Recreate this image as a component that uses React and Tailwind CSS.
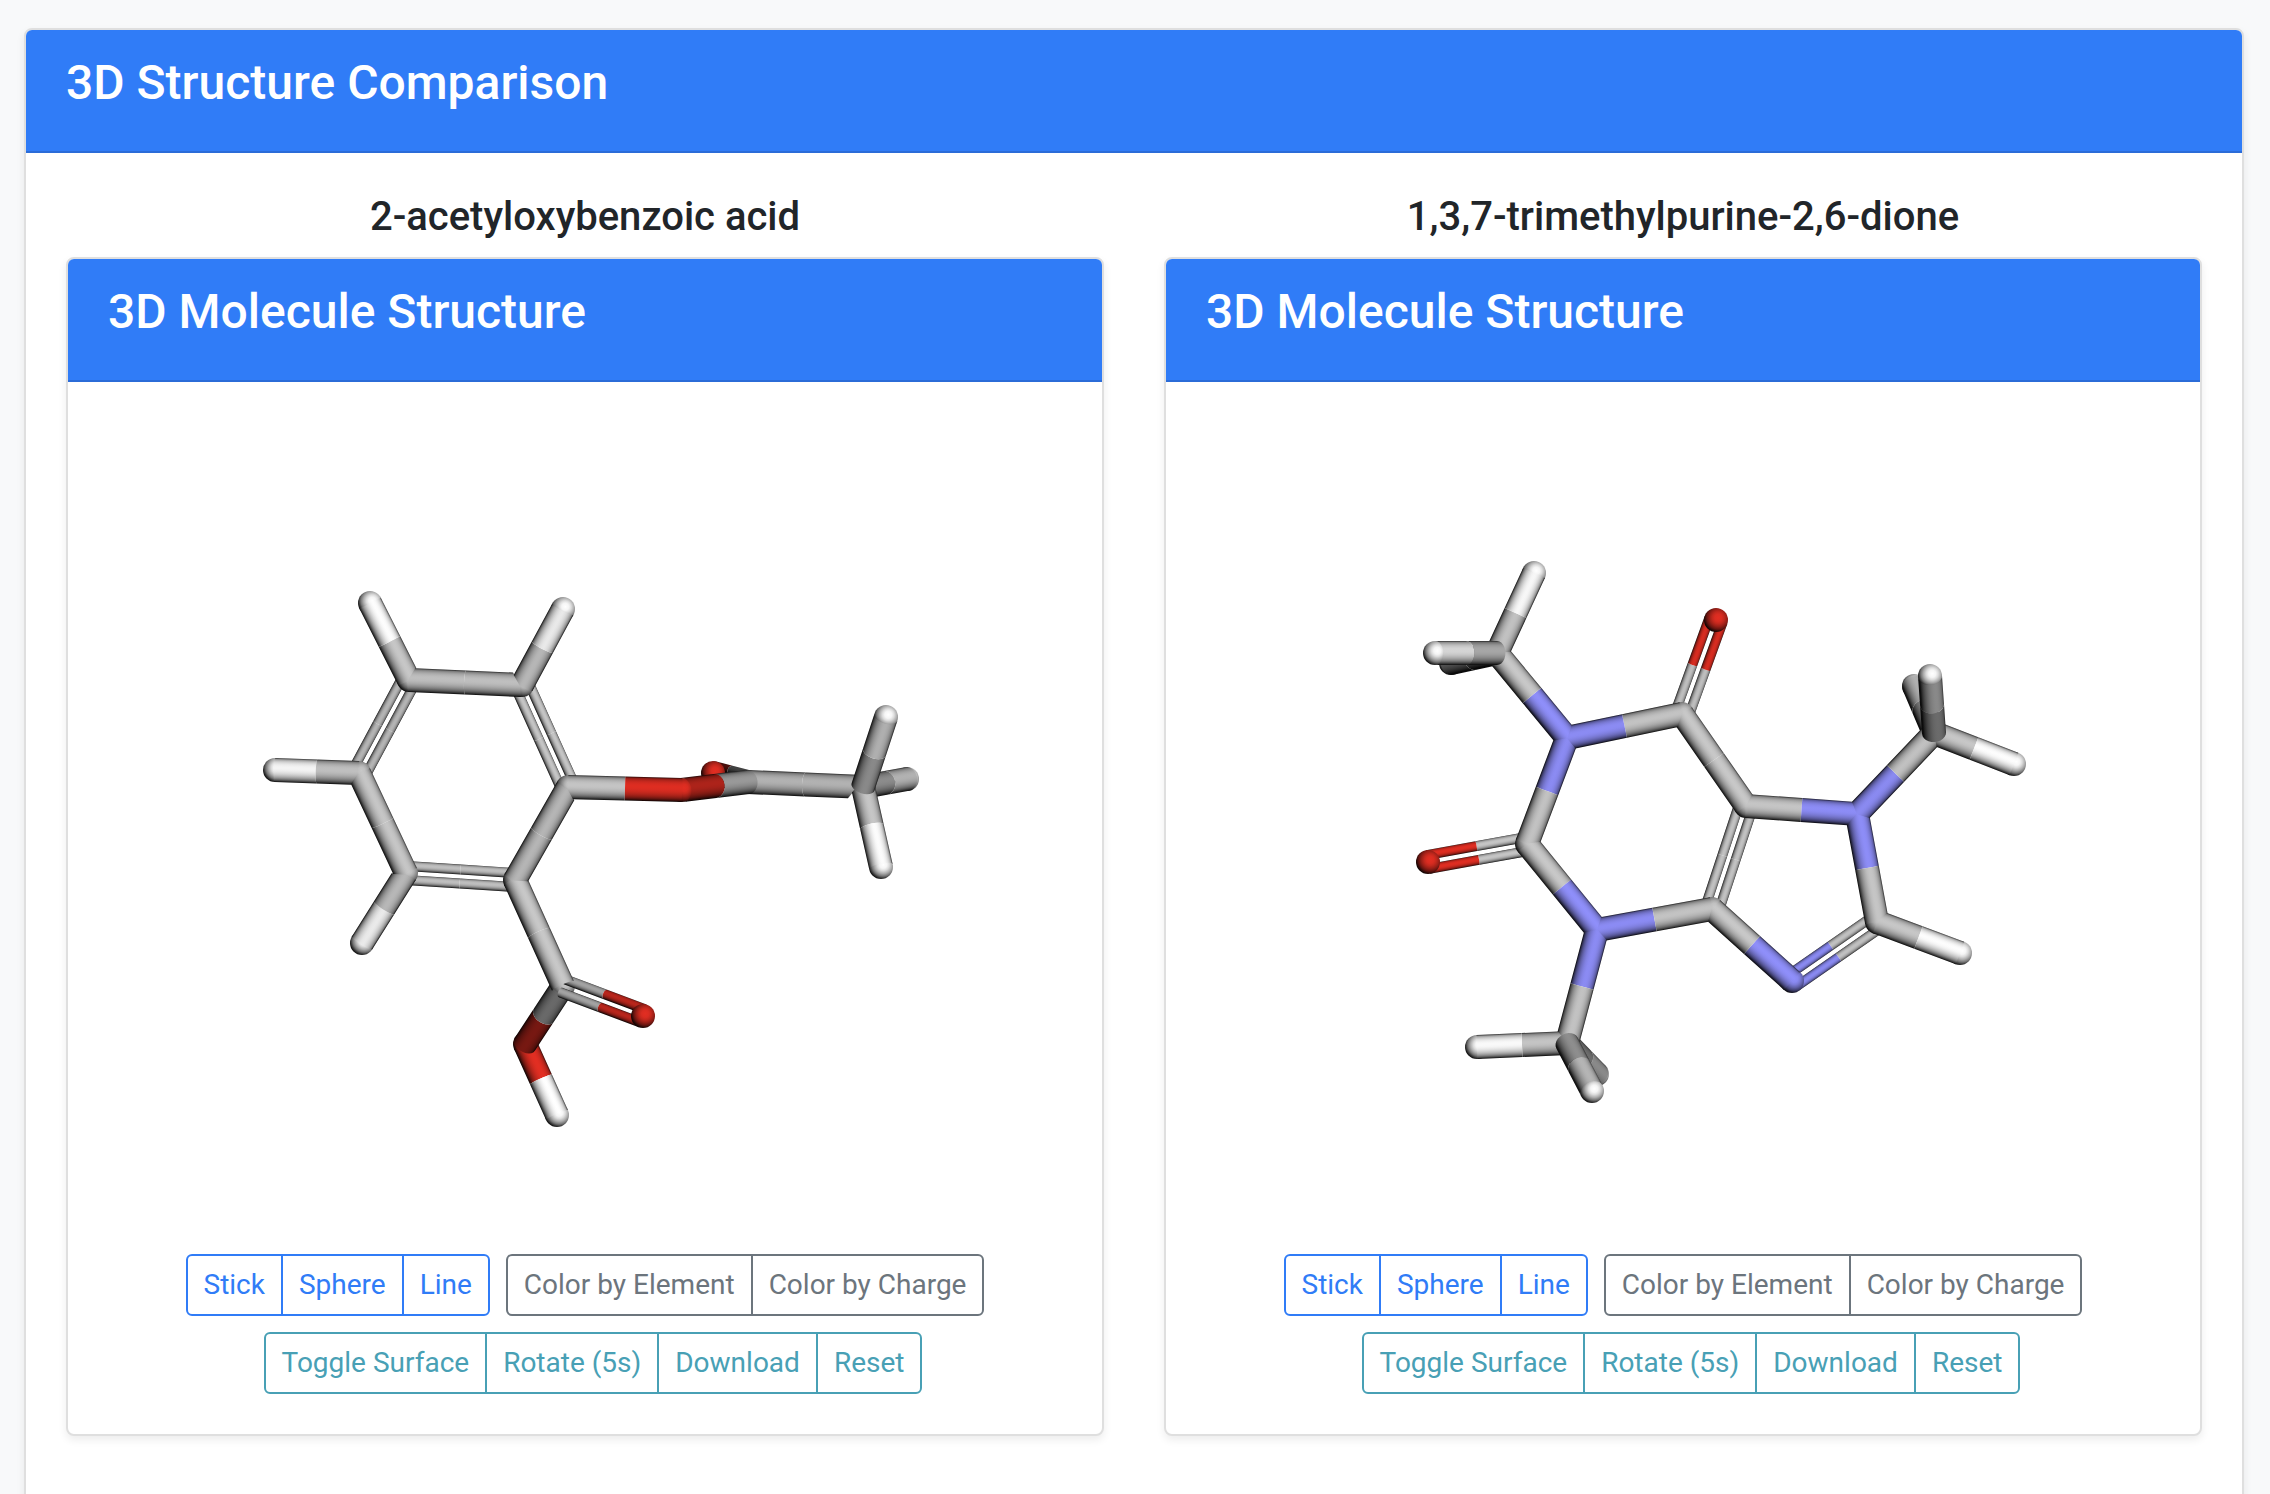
import React, { useId } from "react";

const STICK_RADIUS = 12;
const DOUBLE_RADIUS = 5;
const DOUBLE_OFFSET = 7;
const LIGHT = [0.189, 0.189, 0.963];

const ELEMENT_COLORS = {
  C: [200, 200, 200],
  H: [255, 255, 255],
  N: [143, 143, 250],
  O: [226, 46, 34],
};

const SPHERE_STOPS = [
  [0, 1],
  [0.3, 0.96],
  [0.5, 0.86],
  [0.73, 0.68],
  [0.95, 0.46],
  [1.1, 0.24],
  [1.25, 0.04],
];

// Atoms are [element, x, y, z]; bonds are [from, to, order].
const ASPIRIN = {
  viewBox: "108 422 954 800",
  atoms: {
    a: ["C", 409, 680, 6],
    b: ["C", 522, 685, 20],
    c: ["C", 359, 773, -13],
    d: ["C", 406, 873, -20],
    e: ["C", 515, 880, -6],
    f: ["C", 568, 787, 13],
    ha: ["H", 370, 603, 8],
    hb: ["H", 563, 609, 34],
    hc: ["H", 275, 770, -22],
    hd: ["H", 362, 943, -32],
    g: ["C", 563, 986, 10],
    od: ["O", 643, 1016, 59],
    os: ["O", 525, 1044, -55],
    ho: ["H", 557, 1115, -48],
    oe: ["O", 682, 790, 13],
    h: ["C", 748, 782, -75],
    ok: ["O", 713, 773, -165],
    m: ["C", 863, 787, -40],
    m1: ["H", 886, 717, 8],
    m2: ["H", 907, 779, -115],
    m3: ["H", 881, 867, -15],
  },
  bonds: [
    ["a", "b", 1], ["a", "c", 2], ["c", "d", 1], ["d", "e", 2], ["e", "f", 1], ["f", "b", 2],
    ["a", "ha", 1], ["b", "hb", 1], ["c", "hc", 1], ["d", "hd", 1],
    ["e", "g", 1], ["g", "od", 2], ["g", "os", 1], ["os", "ho", 1],
    ["f", "oe", 1], ["oe", "h", 1], ["h", "ok", 2], ["h", "m", 1],
    ["m", "m1", 1], ["m", "m2", 1], ["m", "m3", 1],
  ],
};

const CAFFEINE = {
  viewBox: "1206 422 954 800",
  atoms: {
    n1: ["N", 1567, 738, 0],
    c2: ["C", 1527, 844, 0],
    n3: ["N", 1597, 930, 0],
    c4: ["C", 1712, 909, 0],
    c5: ["C", 1746, 806, 0],
    c6: ["C", 1682, 714, 0],
    o6: ["O", 1716, 620, 6],
    o2: ["O", 1428, 862, 6],
    n7: ["N", 1857, 814, 0],
    c8: ["C", 1877, 922, 0],
    n9: ["N", 1792, 981, 0],
    h8: ["H", 1960, 953, 0],
    ma: ["C", 1497, 653, 0],
    a1: ["H", 1534, 573, 0],
    a2: ["H", 1435, 653, 62],
    a3: ["H", 1451, 663, -74],
    mb: ["C", 1567, 1043, 0],
    b1: ["H", 1477, 1047, 0],
    b2: ["H", 1592, 1091, 68],
    b3: ["H", 1597, 1074, -76],
    mc: ["C", 1934, 733, 0],
    d1: ["H", 2014, 764, 0],
    d2: ["H", 1930, 676, 66],
    d3: ["H", 1914, 686, -71],
  },
  bonds: [
    ["n1", "c2", 1], ["c2", "n3", 1], ["n3", "c4", 1], ["c4", "c5", 2], ["c5", "c6", 1], ["c6", "n1", 1],
    ["c6", "o6", 2], ["c2", "o2", 2], ["c5", "n7", 1], ["n7", "c8", 1], ["c8", "n9", 2], ["n9", "c4", 1],
    ["c8", "h8", 1], ["n1", "ma", 1], ["n3", "mb", 1], ["n7", "mc", 1],
    ["ma", "a1", 1], ["ma", "a2", 1], ["ma", "a3", 1],
    ["mb", "b1", 1], ["mb", "b2", 1], ["mb", "b3", 1],
    ["mc", "d1", 1], ["mc", "d2", 1], ["mc", "d3", 1],
  ],
};

function shade(element, level) {
  const k = Math.min(1, Math.max(0.04, level));
  return `rgb(${ELEMENT_COLORS[element].map((v) => Math.round(v * k)).join(",")})`;
}

// Unit vector between two points, with y pointing up.
function direction(start, end) {
  const d = [end[0] - start[0], start[1] - end[1], end[2] - start[2]];
  const length = Math.hypot(...d);
  return d.map((v) => v / length);
}

// Keeps the part of a polygon where `inside` is not negative.
function clip(points, inside) {
  const kept = [];
  points.forEach((point, i) => {
    const next = points[(i + 1) % points.length];
    const here = inside(point);
    const there = inside(next);
    if (here >= 0) kept.push(point);
    if (here >= 0 !== there >= 0) {
      const t = here / (here - there);
      kept.push([point[0] + (next[0] - point[0]) * t, point[1] + (next[1] - point[1]) * t]);
    }
  });
  return kept;
}

// A cylinder lit across its width, with the visible arcs of its end circles,
// mitred against the directions in `rivals` that leave the same atom.
function cylinder(element, start, end, radius, key, rivals) {
  const dir = direction(start, end);
  const flat = Math.hypot(dir[0], dir[1]);
  const along = [dir[0] / flat, dir[1] / flat];
  const side = [-along[1], along[0], 0];
  const front = [-dir[2] * along[0], -dir[2] * along[1], flat];
  const stops = [];
  for (let i = 0; i <= 16; i += 1) {
    const u = -1 + i / 8;
    const w = Math.sqrt(1 - u * u);
    const level = LIGHT.reduce((sum, l, j) => sum + l * (u * side[j] + w * front[j]), 0);
    stops.push([i / 16, shade(element, level)]);
  }
  const arc = (center, from, to) => {
    const points = [];
    for (let i = 0; i <= 12; i += 1) {
      const t = from + ((to - from) * i) / 12;
      points.push([
        center[0] + radius * (Math.cos(t) * side[0] + Math.sin(t) * front[0]),
        center[1] - radius * (Math.cos(t) * side[1] + Math.sin(t) * front[1]),
      ]);
    }
    return points;
  };
  let outline = [...arc(start, 0, Math.PI), ...arc(end, Math.PI, 0)];
  rivals.forEach((rival) => {
    if (Math.abs(dir[2]) > 0.5 || Math.abs(rival[2]) > 0.5) return;
    const diff = dir.map((v, i) => v - rival[i]);
    outline = clip(
      outline,
      (p) => (p[0] - start[0]) * diff[0] - (p[1] - start[1]) * diff[1] + radius * diff[2] + 0.5,
    );
  });
  return {
    kind: "cylinder",
    key,
    points: outline.map((p) => p.map((v) => v.toFixed(2)).join(",")).join(" "),
    stops,
    x1: start[0] - radius * side[0],
    y1: start[1] + radius * side[1],
    x2: start[0] + radius * side[0],
    y2: start[1] - radius * side[1],
  };
}

function buildShapes({ atoms, bonds }) {
  const shapes = [];
  const depth = {};
  const spot = (name) => atoms[name].slice(1);
  const rivalsOf = (name, other) =>
    bonds
      .filter(([from, to, order]) => order === 1 && (from === name || to === name))
      .map(([from, to]) => (from === name ? to : from))
      .filter((end) => end !== other)
      .map((end) => direction(spot(name), spot(end)));

  bonds.forEach(([from, to, order]) => {
    const pa = spot(from);
    const pb = spot(to);
    const length = Math.hypot(pb[0] - pa[0], pb[1] - pa[1]);
    const normal = [-(pb[1] - pa[1]) / length, (pb[0] - pa[0]) / length];
    const double = order === 2;
    const offsets = double ? [-DOUBLE_OFFSET, DOUBLE_OFFSET] : [0];
    const radius = double ? DOUBLE_RADIUS : STICK_RADIUS;
    offsets.forEach((offset) => {
      const shift = (p) => [p[0] + normal[0] * offset, p[1] + normal[1] * offset, p[2]];
      const start = shift(pa);
      const end = shift(pb);
      const middle = start.map((v, i) => (v + end[i]) / 2);
      const lift = double ? -20 : 0;
      const keyA = (start[2] * 3 + end[2]) / 4 + lift;
      const keyB = (start[2] + end[2] * 3) / 4 + lift;
      shapes.push(cylinder(atoms[from][0], start, middle, radius, keyA, double ? [] : rivalsOf(from, to)));
      shapes.push(cylinder(atoms[to][0], end, middle, radius, keyB, double ? [] : rivalsOf(to, from)));
      if (!double) {
        depth[from] = Math.min(depth[from] ?? Infinity, keyA);
        depth[to] = Math.min(depth[to] ?? Infinity, keyB);
      }
    });
  });
  Object.entries(atoms).forEach(([name, [element, x, y, z]]) => {
    shapes.push({ kind: "sphere", key: (depth[name] ?? z + 20) - 1, element, x, y });
  });
  return shapes.sort((p, q) => p.key - q.key);
}

function MoleculeViewer({ molecule, label }) {
  const prefix = useId();
  return (
    <svg className="block h-[800px] w-full" viewBox={molecule.viewBox} role="img" aria-label={label}>
      {buildShapes(molecule).map((shape, index) => {
        const id = `${prefix}-${index}`;
        if (shape.kind === "sphere") {
          const r = STICK_RADIUS;
          return (
            <g key={id}>
              <radialGradient
                id={id}
                gradientUnits="userSpaceOnUse"
                cx={shape.x + r * 0.19}
                cy={shape.y - r * 0.19}
                r={r * 1.25}
              >
                {SPHERE_STOPS.map(([at, level]) => (
                  <stop key={at} offset={at / 1.25} stopColor={shade(shape.element, level)} />
                ))}
              </radialGradient>
              <circle cx={shape.x} cy={shape.y} r={r} fill={`url(#${id})`} />
            </g>
          );
        }
        return (
          <g key={id}>
            <linearGradient
              id={id}
              gradientUnits="userSpaceOnUse"
              x1={shape.x1}
              y1={shape.y1}
              x2={shape.x2}
              y2={shape.y2}
            >
              {shape.stops.map(([at, color]) => (
                <stop key={at} offset={at} stopColor={color} />
              ))}
            </linearGradient>
            <polygon points={shape.points} fill={`url(#${id})`} />
          </g>
        );
      })}
    </svg>
  );
}

const GROUP_TONES = {
  primary: "border-[#307cf7] text-[#307cf7]",
  secondary: "border-[#6c757d] text-[#6c757d]",
  info: "border-[#48a0b5] text-[#48a0b5]",
};

function ButtonGroup({ tone, labels, className = "" }) {
  return (
    <div role="group" className={`flex ${className}`}>
      {labels.map((label) => (
        <button
          key={label}
          type="button"
          className={`-ml-0.5 border-2 px-4 py-2 text-[28px] leading-[42px] whitespace-nowrap first:ml-0 first:rounded-l-md last:rounded-r-md ${GROUP_TONES[tone]}`}
        >
          {label}
        </button>
      ))}
    </div>
  );
}

function Card({ title, titleAs: Title, className = "", children }) {
  return (
    <section
      className={`rounded-lg border-2 border-[#dfdfdf] bg-white shadow-[0_4px_8px_rgba(0,0,0,0.075)] ${className}`}
    >
      <header className="rounded-t-md border-b-2 border-[#2b6cd8] bg-[#307cf7] px-10 pt-6 pb-10 text-white">
        <Title className="text-[48px] leading-[57px] font-medium">{title}</Title>
      </header>
      <div className="p-10">{children}</div>
    </section>
  );
}

function MoleculeColumn({ name, molecule }) {
  return (
    <div className="min-w-0">
      <h2 className="mb-4 text-center text-[40px] leading-[48px] font-medium">{name}</h2>
      <Card title="3D Molecule Structure" titleAs="h3">
        <MoleculeViewer molecule={molecule} label={name} />
        <div className="mt-8 flex flex-wrap justify-center gap-y-4">
          <ButtonGroup tone="primary" labels={["Stick", "Sphere", "Line"]} />
          <ButtonGroup tone="secondary" labels={["Color by Element", "Color by Charge"]} className="ml-4" />
          <ButtonGroup tone="info" labels={["Toggle Surface", "Rotate (5s)", "Download", "Reset"]} className="ml-4" />
        </div>
      </Card>
    </div>
  );
}

export default function App() {
  return (
    <div className="h-screen overflow-hidden bg-[#f8f9fa] pt-7 pr-[26px] pl-6 font-[Roboto,sans-serif] text-[#212529]">
      <Card title="3D Structure Comparison" titleAs="h1" className="min-h-screen">
        <div className="grid grid-cols-2 gap-[60px]">
          <MoleculeColumn name="2-acetyloxybenzoic acid" molecule={ASPIRIN} />
          <MoleculeColumn name="1,3,7-trimethylpurine-2,6-dione" molecule={CAFFEINE} />
        </div>
      </Card>
    </div>
  );
}
